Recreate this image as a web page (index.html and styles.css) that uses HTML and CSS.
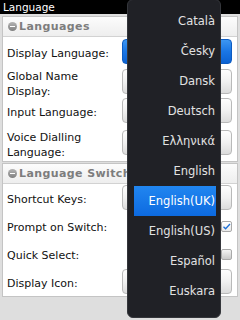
FILE: index.html
```html
<!DOCTYPE html>
<html lang="en">
<head>
  <meta charset="UTF-8" />
  <title>Language</title>
  <link rel="stylesheet" href="styles.css">
</head>
<body>
  <div class="screen">
    <div class="titlebar">Language</div>

    <div class="content">
      <section class="group">
        <div class="group-head"><span class="collapse"></span>Languages</div>
        <div class="row h30">
          <span class="label">Display Language:</span>
          <span class="btn active"></span>
        </div>
        <div class="row h30">
          <span class="label">Global Name<br />Display:</span>
          <span class="btn"></span>
        </div>
        <div class="row h28">
          <span class="label">Input Language:</span>
          <span class="btn"></span>
        </div>
        <div class="row h36">
          <span class="label">Voice Dialling<br />Language:</span>
          <span class="btn"></span>
        </div>
      </section>

      <section class="group">
        <div class="group-head"><span class="collapse"></span>Language Switcher</div>
        <div class="row h28">
          <span class="label">Shortcut Keys:</span>
          <span class="btn"></span>
        </div>
        <div class="row h28">
          <span class="label">Prompt on Switch:</span>
          <span class="check checked">
            <svg viewBox="0 0 11 11" width="11" height="11"><path d="M2.5 5.8 L4.6 7.8 L9 3" fill="none" stroke="#1d6fd6" stroke-width="1.3" /></svg>
          </span>
        </div>
        <div class="row h28">
          <span class="label">Quick Select:</span>
          <span class="check"></span>
        </div>
        <div class="row h28">
          <span class="label">Display Icon:</span>
          <span class="btn"></span>
        </div>
      </section>
    </div>

    <!-- language picker popup -->
    <ul class="menu">
      <li>Català</li>
      <li>Česky</li>
      <li>Dansk</li>
      <li>Deutsch</li>
      <li>Ελληνικά</li>
      <li>English</li>
      <li class="selected">English(UK)</li>
      <li>English(US)</li>
      <li>Español</li>
      <li>Euskara</li>
    </ul>
  </div>
</body>
</html>
```

FILE: styles.css
```css
body {
  margin: 0;
  background: #dedede;
  font-family: 'DejaVu Sans', 'Noto Sans', sans-serif;
}

.screen {
  position: relative;
  width: 240px;
  height: 320px;
  overflow: hidden;
  background: #dedede;
}

.titlebar {
  height: 14px;
  background: #000;
  color: #fff;
  font-size: 10.5px;
  line-height: 14px;
  padding-left: 3px;
}

.content {
  display: flex;
  flex-direction: column;
  gap: 1px;
  padding: 2px 2px 0 2px;
}

.group {
  background: #fff;
  border: 1px solid #c4c4c4;
}

.group-head {
  display: flex;
  align-items: center;
  gap: 2px;
  height: 19px;
  padding-left: 5px;
  background: linear-gradient(#fcfcfc, #eeeeee);
  border-bottom: 1px solid #d2d2d2;
  color: #7d7d7d;
  font-size: 11px;
  font-weight: bold;
  letter-spacing: 0.4px;
  white-space: nowrap;
}

.collapse {
  position: relative;
  width: 9px;
  height: 9px;
  border-radius: 50%;
  background: linear-gradient(#b4b4b4, #808080);
  flex-shrink: 0;
}

.collapse::after {
  content: '';
  position: absolute;
  left: 2px;
  right: 2px;
  top: 4px;
  height: 1px;
  background: #fff;
}

.row {
  display: flex;
  align-items: center;
  justify-content: space-between;
  padding: 0 5px 0 4px;
}

.h28 { height: 28px; }
.h30 { height: 30px; }
.h36 { height: 36px; }

.label {
  padding-top: 3px;
  font-size: 11px;
  line-height: 15px;
  color: #111;
}

.btn {
  width: 108px;
  height: 23px;
  margin-bottom: 2px;
  border: 1px solid #b9b9b9;
  border-radius: 4px;
  background: linear-gradient(#fefefe, #f1f1f1 50%, #dcdcdc);
}

.btn.active {
  border-color: #0d5cc2;
  background: linear-gradient(#3d97f2, #1a76e4 50%, #0c62d2);
}

.check {
  width: 9px;
  height: 9px;
  border: 1px solid #a9a9a9;
  border-radius: 2px;
  background: linear-gradient(#f4f4f4, #c9c9c9);
}

.check.checked {
  background: linear-gradient(#ffffff, #e9e9e9);
}

.check svg {
  display: block;
  margin: -1px 0 0 -1px;
}

.menu {
  position: absolute;
  left: 127px;
  top: -1px;
  width: 94px;
  height: 319px;
  margin: 0;
  padding: 6px 4px 0 6px;
  box-sizing: border-box;
  list-style: none;
  background: #202126;
  border: 1px solid #34363b;
  border-radius: 6px;
}

.menu li {
  height: 30px;
  line-height: 30px;
  padding-right: 1px;
  text-align: right;
  color: #e2e2e2;
  font-size: 11.5px;
  white-space: nowrap;
}

.menu li.selected {
  background: linear-gradient(#2186f0, #0d6ae0);
  color: #fff;
}
```
